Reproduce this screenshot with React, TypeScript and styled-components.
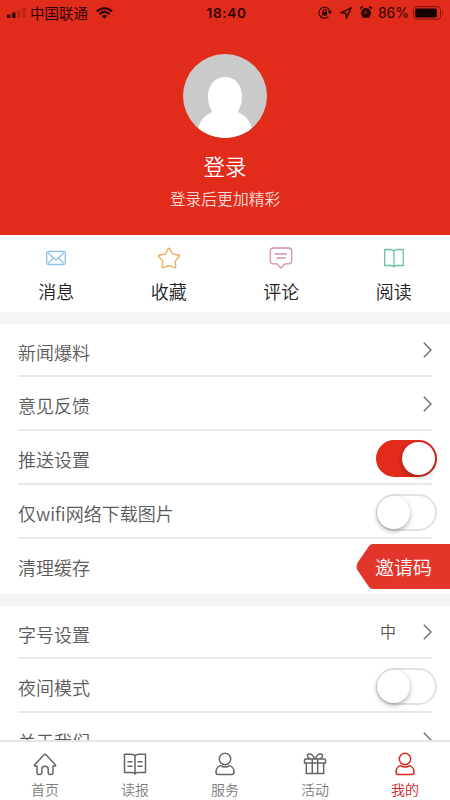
import React, { useState } from "react";
import styled, { createGlobalStyle } from "styled-components";

const RED = "#e12b1b";

const GlobalStyle = createGlobalStyle`
  * { box-sizing: border-box; }
  html, body { margin: 0; background: #fff; }
  body { font-family: "Noto Sans CJK SC", "Noto Sans", sans-serif; font-weight: 350; }
  button { font: inherit; border: 0; padding: 0; background: none; }
`;

const Screen = styled.div`
  position: relative;
  display: flex;
  flex-direction: column;
  width: 450px;
  height: 800px;
  overflow: hidden;
  background: #fff;
`;

const Header = styled.header`
  display: flex;
  flex-direction: column;
  align-items: center;
  flex: none;
  height: 235px;
  background: ${RED};
  color: #fff;
`;

const StatusBar = styled.div`
  display: grid;
  grid-template-columns: 1fr auto 1fr;
  align-items: center;
  width: 100%;
  height: 24px;
  padding: 1px 6px 0 7px;
  color: #2c0805;
  font-size: 14px;
  line-height: 20px;
`;

const StatusGroup = styled.div<{ $end?: boolean }>`
  display: flex;
  align-items: center;
  justify-content: ${(p) => (p.$end ? "flex-end" : "flex-start")};
`;

const Carrier = styled.span`
  margin: 0 8px 0 4px;
  font-size: 14.5px;
  font-weight: 400;
`;

const Clock = styled.span`
  padding-left: 2px;
  font-family: Inter, sans-serif;
  font-size: 13.5px;
  font-weight: 600;
  letter-spacing: 0.7px;
`;

const Percent = styled.span`
  margin: 0 4px 0 6px;
  font-family: Inter, sans-serif;
  font-size: 14px;
  font-weight: 400;
`;

const StatusIcon = styled.svg<{ $gap?: number }>`
  flex: none;
  margin-left: ${(p) => p.$gap ?? 0}px;
`;

const Avatar = styled.svg`
  width: 84px;
  height: 84px;
  margin-top: 30px;
`;

const LoginTitle = styled.div`
  margin-top: 13px;
  font-size: 21.5px;
  line-height: 30px;
`;

const LoginHint = styled.div`
  margin-top: 6px;
  color: #fbd9d4;
  font-size: 15.8px;
  line-height: 24px;
`;

const QuickLinks = styled.nav`
  display: grid;
  grid-template-columns: repeat(4, 1fr);
  flex: none;
  height: 77px;
`;

const QuickLink = styled.button`
  display: flex;
  flex-direction: column;
  align-items: center;
  padding-top: 11px;
  color: #222;
  font-size: 18px;
  line-height: 26px;
`;

const QuickIcon = styled.svg<{ $tone: string }>`
  width: 24px;
  height: 24px;
  margin-bottom: 8px;
  fill: none;
  stroke: ${(p) => p.$tone};
  stroke-width: 1.3;
  stroke-linecap: round;
  stroke-linejoin: round;
`;

const Divider = styled.div`
  flex: none;
  height: 12px;
  background: #f5f5f5;
`;

const Settings = styled.section`
  flex: none;
  padding: 0 18px;
`;

const Row = styled.div<{ $first?: boolean; $last?: boolean }>`
  display: flex;
  align-items: center;
  justify-content: space-between;
  height: ${(p) => (p.$first ? 53 : p.$last ? 55 : 54)}px;
  padding-top: 3px;
  padding-bottom: ${(p) => (p.$last ? 3 : 0)}px;
  border-bottom: ${(p) => (p.$last ? 0 : 2)}px solid #e8e8e8;
`;

const RowLabel = styled.span`
  color: #5a5a5a;
  font-size: 18px;
  line-height: 26px;
  padding-top: 1px;
`;

const RowEnd = styled.span`
  display: flex;
  align-items: center;
  gap: 27px;
`;

const RowValue = styled.span`
  margin-top: -4px;
  color: #505050;
  font-size: 16px;
  line-height: 24px;
`;

const Chevron = styled.svg`
  width: 9px;
  height: 16px;
  margin-top: -2px;
  fill: none;
  stroke: #666;
  stroke-width: 1.3;
`;

const Switch = styled.button<{ $on: boolean }>`
  display: flex;
  align-items: center;
  justify-content: ${(p) => (p.$on ? "flex-end" : "flex-start")};
  width: 61px;
  height: 37px;
  margin: 0 -5px 0 0;
  border: 2px solid ${(p) => (p.$on ? RED : "#e2e2e2")};
  border-radius: 19px;
  background: ${(p) => (p.$on ? RED : "#fff")};
`;

const Knob = styled.span<{ $on: boolean }>`
  width: 33px;
  height: 33px;
  margin-left: ${(p) => (p.$on ? 0 : -1)}px;
  border-radius: 50%;
  background: #fff;
  box-shadow: 0 2px 5px rgba(0, 0, 0, 0.32);
`;

const InviteTag = styled.button`
  position: absolute;
  right: 0;
  top: 544px;
  display: flex;
  align-items: center;
  justify-content: flex-end;
  width: 94px;
  height: 45px;
  padding-right: 18px;
  color: #fff;
`;

const InviteShape = styled.svg`
  position: absolute;
  inset: 0;
  fill: #e2362b;
`;

const InviteText = styled.span`
  position: relative;
  font-size: 19px;
  line-height: 28px;
`;

const TabBar = styled.nav`
  position: absolute;
  right: 0;
  bottom: 0;
  left: 0;
  display: grid;
  grid-template-columns: repeat(5, 1fr);
  height: 60px;
  border-top: 2px solid #e5e5e5;
  background: #fff;
`;

const Tab = styled.button<{ $active?: boolean }>`
  display: flex;
  flex-direction: column;
  align-items: center;
  padding-top: 10px;
  color: ${(p) => (p.$active ? "#d8251f" : "#7c7c7c")};
  font-size: 14px;
  line-height: 20px;
`;

const TabIcon = styled.svg<{ $active?: boolean }>`
  width: 24px;
  height: 24px;
  margin-bottom: 3px;
  fill: none;
  stroke: ${(p) => (p.$active ? "#d8251f" : "#666")};
  stroke-width: 1.5;
  stroke-linecap: round;
  stroke-linejoin: round;
`;

const person = (
  <>
    <circle cx="12" cy="7" r="5.7" />
    <path d="M7.5 13.6C4.6 14.5 3 17 3 20.3C3 22 3.6 22.5 5.3 22.5H18.7C20.4 22.5 21 22 21 20.3C21 17 19.4 14.5 16.5 13.6C13.8 15.4 10.2 15.4 7.5 13.6Z" />
  </>
);

const quickLinks = [
  {
    label: "消息",
    tone: "#8fc3e6",
    icon: (
      <>
        <rect x="2.7" y="5.5" width="18.6" height="13" rx="1.5" />
        <path d="M4.5 7.3L12 14L19.5 7.3M4.5 17L9.2 12M19.5 17L14.8 12" />
      </>
    ),
  },
  {
    label: "收藏",
    tone: "#eaa94f",
    icon: <path d="M11.1 3Q12 1.5 12.9 3L15.2 7.5Q15.5 8 16.2 8.1L21.2 9Q23.3 9.5 21.9 11L18.6 14.6Q18.1 15.1 18.2 15.8L18.8 20.3Q18.9 22.2 17.2 21.5L12.8 19.7Q12 19.4 11.2 19.7L6.8 21.5Q5.1 22.2 5.2 20.3L5.8 15.8Q5.9 15.1 5.4 14.6L2.1 11Q.7 9.5 2.8 9L7.8 8.1Q8.5 8 8.8 7.5Z" />,
  },
  {
    label: "评论",
    tone: "#d58cae",
    icon: <path d="M4.3 2H19.7Q22.7 2 22.7 5V14.8Q22.7 17.8 19.7 17.8H16.2L12 22L7.8 17.8H4.3Q1.3 17.8 1.3 14.8V5Q1.3 2 4.3 2ZM6.5 8H17.5M8 12H16" />,
  },
  {
    label: "阅读",
    tone: "#67c4a1",
    icon: <path d="M12 5Q10.5 3.5 8.5 3.5H2.7V19.5H8.8Q11 19.5 12 21Q13 19.5 15.2 19.5H21.3V3.5H15.5Q13.5 3.5 12 5ZM12 5V21" />,
  },
];

const tabs = [
  {
    label: "首页",
    icon: <path d="M1.5 13L11 2.7Q12 1.7 13 2.7L22.5 13Q23 14 21.8 14H20V20.4Q20 22.4 18 22.4H17Q15.2 22.4 15.2 20.4V17.2Q15.2 14.3 12 14.3Q8.8 14.3 8.8 17.2V20.4Q8.8 22.4 7 22.4H6Q4 22.4 4 20.4V14H2.2Q1 14 1.5 13Z" />,
  },
  {
    label: "读报",
    icon: <path d="M12 4Q11 2.3 8 2.3H1.5V20.5H9Q11.2 20.5 12 22Q12.8 20.5 15 20.5H22.5V2.3H16Q13 2.3 12 4ZM12 4V21.5M5 9.7H9M5 14.2H9M15 9.7H19M15 14.2H19" />,
  },
  { label: "服务", icon: person },
  {
    label: "活动",
    icon: <path d="M2.5 7H21.5Q22.5 7 22.5 8V11H1.5V8Q1.5 7 2.5 7ZM3.3 11V21.5H20.7V11M9.3 7V21.5M14.7 7V21.5M11.5 7Q10 2 6.5 2Q3.8 2 4.6 4.5Q5.3 6.2 8 7M12.5 7Q14 2 17.5 2Q20.2 2 19.4 4.5Q18.7 6.2 16 7" />,
  },
  { label: "我的", icon: person },
];

const Arrow = () => (
  <Chevron viewBox="0 0 9 16">
    <path d="M.8 .8L8 8L.8 15.2" />
  </Chevron>
);

function Toggle({ initial = false, label }: { initial?: boolean; label: string }) {
  const [on, setOn] = useState(initial);
  return (
    <Switch $on={on} role="switch" aria-checked={on} aria-label={label} onClick={() => setOn(!on)}>
      <Knob $on={on} />
    </Switch>
  );
}

export default function App() {
  return (
    <>
      <GlobalStyle />
      <Screen>
        <Header>
          <StatusBar>
            <StatusGroup>
              <StatusIcon width="19" height="12" viewBox="0 0 19 12" fill="currentColor">
                <rect x="0" y="7.5" width="3.5" height="3.5" rx=".7" />
                <rect x="5" y="5.5" width="3.5" height="5.5" rx=".7" />
                <rect x="10.3" y="3" width="3.2" height="8" rx=".7" opacity=".22" />
                <rect x="15.3" y="0.5" width="3.2" height="10.5" rx=".7" opacity=".22" />
              </StatusIcon>
              <Carrier>中国联通</Carrier>
              <StatusIcon width="17" height="12" viewBox="0 0 17 12" fill="none" stroke="currentColor" strokeWidth="2.1">
                <path d="M.8 4.4Q8.5-2.2 16.2 4.4M3.5 7.1Q8.5 2.8 13.5 7.1" />
                <path d="M8.5 11.8L5.7 9Q8.5 6.8 11.3 9Z" fill="currentColor" stroke="none" />
              </StatusIcon>
            </StatusGroup>
            <Clock>18:40</Clock>
            <StatusGroup $end>
              <StatusIcon width="14" height="13" viewBox="0 0 14 13" fill="none" stroke="currentColor" strokeWidth="1.1">
                <path d="M10.4 10.7A5.5 5.5 0 1 1 12 6.5M10.3 5.4L12 7.4L13.6 5.3" />
                <rect x="4.1" y="5.8" width="5" height="3.7" fill="currentColor" stroke="none" />
                <path d="M5.1 6V4.6Q5.1 3.3 6.6 3.3Q8.1 3.3 8.1 4.6V6" />
              </StatusIcon>
              <StatusIcon $gap={8} width="12" height="12" viewBox="0 0 12 12" fill="none" stroke="currentColor" strokeWidth="1.4">
                <path d="M1 5.7L11 1L6.5 11L5.8 6.3Z" />
              </StatusIcon>
              <StatusIcon $gap={8} width="12" height="13" viewBox="0 0 12 13" fill="currentColor">
                <circle cx="6" cy="7" r="5" />
                <path d="M.3 3.5A2 2 0 0 1 3.5 1.1ZM11.7 3.5A2 2 0 0 0 8.5 1.1ZM2 12.5L3 10.5L4 11.5ZM10 12.5L9 10.5L8 11.5Z" />
                <path d="M6 4V7.3H3.8" fill="none" stroke={RED} strokeWidth=".8" />
              </StatusIcon>
              <Percent>86%</Percent>
              <StatusIcon width="31" height="14" viewBox="0 0 31 14">
                <rect x=".6" y=".6" width="27" height="12.6" rx="3" fill="none" stroke="#7d1811" />
                <rect x="2.3" y="2.4" width="21.5" height="9" rx="1.3" fill="#120202" />
                <path d="M29 4.6Q30.8 7 29 9.4Z" fill="#7d1811" />
              </StatusIcon>
            </StatusGroup>
          </StatusBar>
          <Avatar viewBox="0 0 84 84">
            <defs>
              <clipPath id="avatar-circle"><circle cx="42" cy="42" r="42" /></clipPath>
            </defs>
            <g clipPath="url(#avatar-circle)">
              <rect width="84" height="84" fill="#cacaca" />
              <path d="M42 23C52 23 59 31 59 42C59 50 57 53 55.3 56.5Q54.7 58.5 58 59.8Q66 64 69 74V84H15V74Q18 64 26 59.8Q29.3 58.5 28.7 56.5C27 53 25 50 25 42C25 31 32 23 42 23Z" fill="#fff" />
            </g>
          </Avatar>
          <LoginTitle>登录</LoginTitle>
          <LoginHint>登录后更加精彩</LoginHint>
        </Header>

        <QuickLinks>
          {quickLinks.map((q) => (
            <QuickLink key={q.label}>
              <QuickIcon viewBox="0 0 24 24" $tone={q.tone}>{q.icon}</QuickIcon>
              {q.label}
            </QuickLink>
          ))}
        </QuickLinks>

        <Divider />
        <Settings>
          <Row $first><RowLabel>新闻爆料</RowLabel><Arrow /></Row>
          <Row><RowLabel>意见反馈</RowLabel><Arrow /></Row>
          <Row><RowLabel>推送设置</RowLabel><Toggle initial label="推送设置" /></Row>
          <Row><RowLabel>仅wifi网络下载图片</RowLabel><Toggle label="仅wifi网络下载图片" /></Row>
          <Row $last><RowLabel>清理缓存</RowLabel></Row>
        </Settings>
        <Divider />
        <Settings>
          <Row $first><RowLabel>字号设置</RowLabel><RowEnd><RowValue>中</RowValue><Arrow /></RowEnd></Row>
          <Row><RowLabel>夜间模式</RowLabel><Toggle label="夜间模式" /></Row>
          <Row><RowLabel>关于我们</RowLabel><Arrow /></Row>
        </Settings>

        <InviteTag>
          <InviteShape width="94" height="45" viewBox="0 0 94 45">
            <path d="M94 0H17Q14.5 0 13 2L2 18Q-.8 22.5 2 27L13 43Q14.5 45 17 45H94Z" />
          </InviteShape>
          <InviteText>邀请码</InviteText>
        </InviteTag>

        <TabBar>
          {tabs.map((t, i) => (
            <Tab key={t.label} $active={i === 4}>
              <TabIcon viewBox="0 0 24 24" $active={i === 4}>{t.icon}</TabIcon>
              {t.label}
            </Tab>
          ))}
        </TabBar>
      </Screen>
    </>
  );
}
